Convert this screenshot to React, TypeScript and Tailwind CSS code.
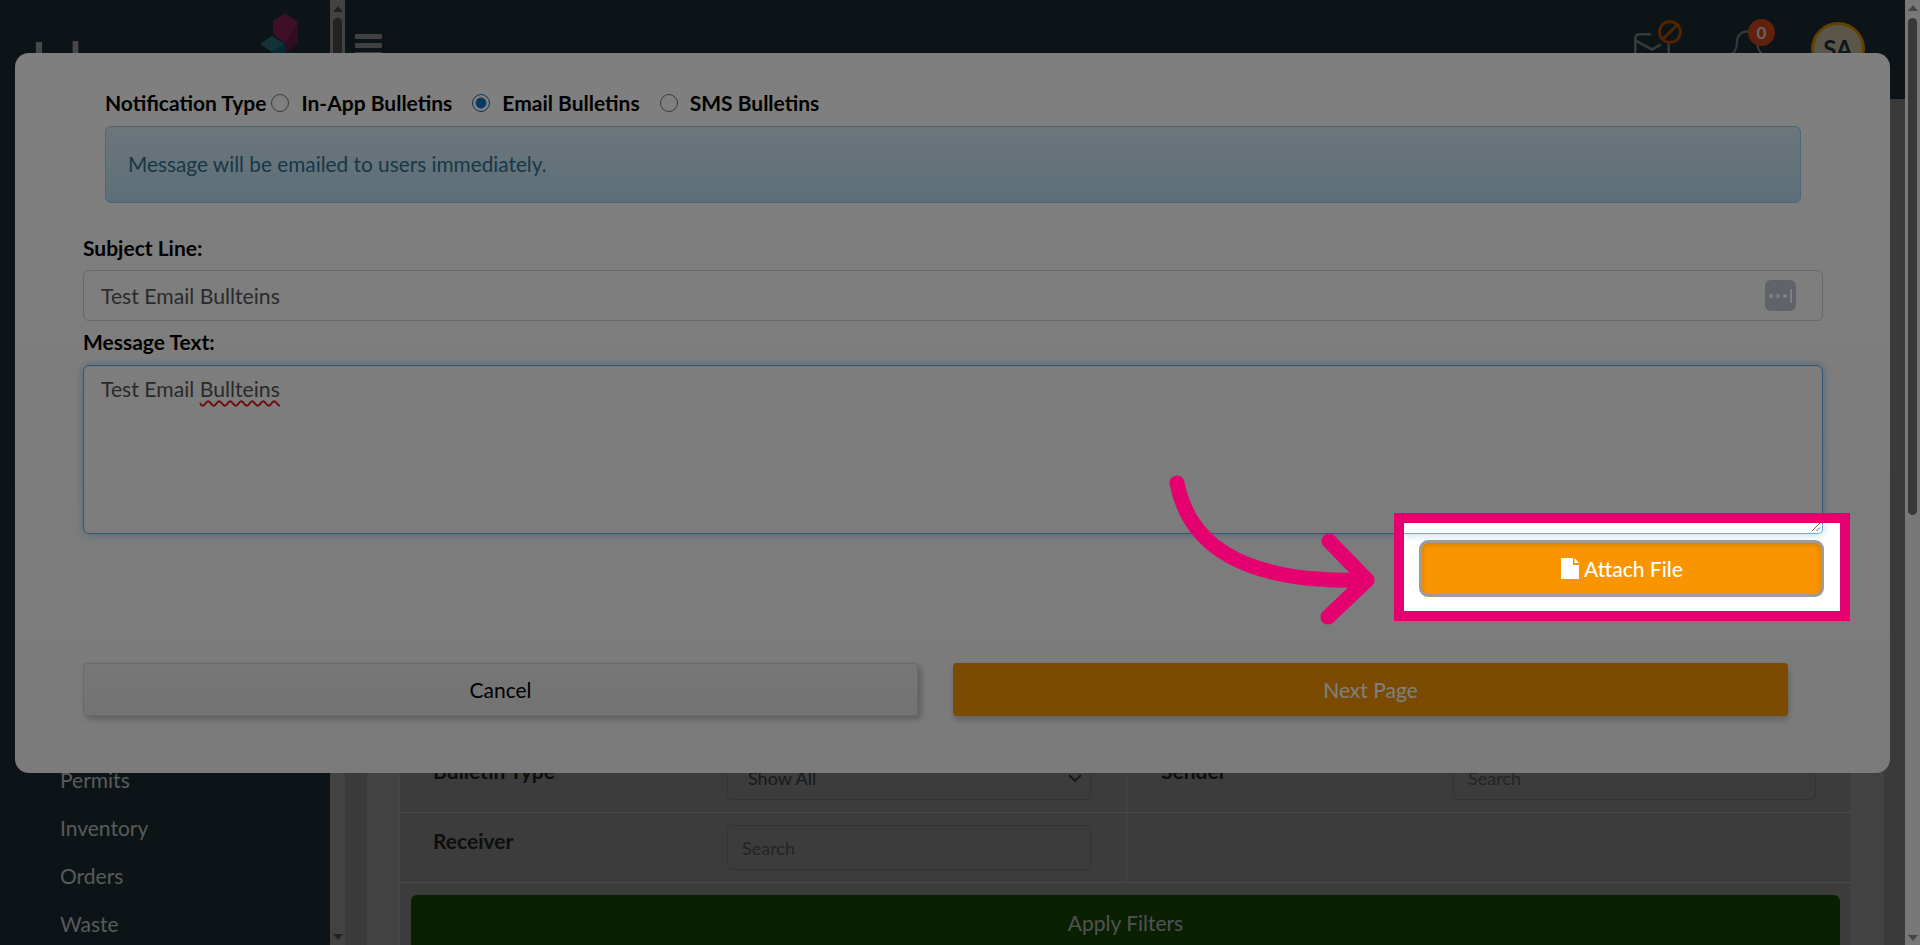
import { Bell } from "lucide-react";

function Radio({ label, checked }: { label: string; checked?: boolean }) {
  return (
    <label className="flex items-center">
      <input
        type="radio"
        name="notification-type"
        defaultChecked={checked}
        className="h-[18px] w-[18px] m-0 accent-[#1472c4]"
      />
      <span className="ml-[12px] font-bold text-[21px]">{label}</span>
    </label>
  );
}

function SidebarScrollbar() {
  return (
    <div className="w-[15px] h-full bg-[#848484] flex flex-col items-center pt-[6px]">
      <div className="w-0 h-0 border-x-[5px] border-x-transparent border-b-[6px] border-b-[#444]" />
      <div className="mt-[6px] w-[9px] h-[300px] rounded-full bg-[#444]" />
      <div className="mt-auto mb-[5px] w-0 h-0 border-x-[5px] border-x-transparent border-t-[6px] border-t-[#444]" />
    </div>
  );
}

function PageScrollbar() {
  return (
    <div className="w-[15px] h-full bg-[#f1f1f1] flex flex-col items-center pt-[5px]">
      <div className="w-0 h-0 border-x-[5px] border-x-transparent border-b-[6px] border-b-[#8a8a8a]" />
      <div className="mt-[7px] w-[9px] h-[497px] rounded-full bg-[#707070]" />
      <div className="mt-auto mb-[4px] w-0 h-0 border-x-[5px] border-x-transparent border-t-[6px] border-t-[#8a8a8a]" />
    </div>
  );
}

function LogoCubes() {
  return (
    <svg width="40" height="70" viewBox="0 0 40 70" className="mt-[13px]">
      <path d="M25 0l13 9v21L25 30 13 21V8z" fill="#7a2050" />
      <path d="M25 30l13-21v21l-13 10z" fill="#601a42" />
      <path d="M12 23l13 8-13 8L0 31z" fill="#28646f" />
      <path d="M25 31v20L12 58V39z" fill="#084f60" />
    </svg>
  );
}

function Header() {
  return (
    <header className="h-[99px] shrink-0 bg-[#19292f] flex items-start pl-[10px] pr-[40px]">
      <div className="mt-[34px] w-[27px] flex flex-col gap-[4px]">
        <div className="h-[5px] rounded-[1px] bg-[#808080]" />
        <div className="h-[5px] rounded-[1px] bg-[#808080]" />
        <div className="h-[5px] rounded-[1px] bg-[#808080]" />
      </div>
      <div className="relative ml-auto mt-[33px] w-[36px] h-[40px]">
        <svg width="36" height="40" viewBox="0 0 36 40" fill="none" stroke="#6c7276" strokeWidth="2.6" strokeLinecap="round">
          <path d="M16 1.3H5a4 4 0 0 0-3.7 4V36" />
          <path d="M1.3 7.5L18 16.5l8-4.5" />
          <path d="M34.7 12V36" />
        </svg>
        <svg width="26" height="26" viewBox="0 0 26 26" fill="none" stroke="#a84800" strokeWidth="2.8" className="absolute right-[-13px] top-[-14px]">
          <circle cx="13" cy="13" r="10.5" />
          <path d="M6 20L20 6" />
        </svg>
      </div>
      <div className="relative ml-[57px] mt-[28px] w-[40px] h-[40px] text-[#6c7276]">
        <Bell size={40} strokeWidth={1.4} />
        <div className="absolute left-[21px] top-[-9px] w-[27px] h-[27px] rounded-full bg-[#c4431a] flex items-center justify-center text-[17px] font-bold text-[#c8c8c8]">
          0
        </div>
      </div>
      <div className="ml-[44px] mt-[22px] w-[54px] h-[54px] rounded-full border-[3px] border-[#c88000] bg-[#b4ae92] flex items-center justify-center text-[24px] font-bold text-[#1d2c3d]">
        SA
      </div>
    </header>
  );
}

function FilterCard() {
  return (
    <div className="mt-[643px] bg-[#787878] border-x border-[#8c8c8c]">
      <div className="flex h-[71px] border-b border-[#929292]">
        <div className="w-[726px] flex pl-[33px] pt-[17px] pr-[35px] justify-between items-start">
          <span className="text-[21px] font-bold text-[#1c1c1c] leading-[24px]">Bulletin Type</span>
          <div className="mt-[-4px] w-[364px] h-[45px] rounded-[5px] border border-[#666] flex items-center justify-between pl-[20px] pr-[8px] pt-[2px] text-[18px] text-[#333]">
            Show All
            <svg width="14" height="9" viewBox="0 0 14 9" fill="none" stroke="#2a2a2a" strokeWidth="1.8">
              <path d="M1 1l6 6 6-6" />
            </svg>
          </div>
        </div>
        <div className="flex-1 border-l border-[#8c8c8c] flex pl-[34px] pr-[35px] pt-[17px] justify-between items-start">
          <span className="text-[21px] font-bold text-[#1c1c1c] leading-[24px]">Sender</span>
          <div className="mt-[-4px] w-[363px] h-[45px] rounded-[5px] border border-[#666] flex items-center pl-[14px] pt-[2px] text-[18px] text-[#484848]">
            Search
          </div>
        </div>
      </div>
      <div className="flex h-[70px] border-b border-[#929292]">
        <div className="w-[726px] flex pl-[33px] pr-[35px] pt-[12px] justify-between items-start">
          <span className="mt-[4px] text-[21px] font-bold text-[#1c1c1c] leading-[24px]">Receiver</span>
          <div className="w-[364px] h-[45px] rounded-[5px] border border-[#666] flex items-center pl-[14px] pt-[2px] text-[18px] text-[#484848]">
            Search
          </div>
        </div>
        <div className="flex-1 border-l border-[#8c8c8c]" />
      </div>
      <div className="px-[11px] pt-[12px]">
        <div className="h-[80px] rounded-[6px] bg-[#124005] pt-[10px] text-center text-[21px] leading-[36px] text-[#a4a4a4]">
          Apply Filters
        </div>
      </div>
    </div>
  );
}

function Modal() {
  return (
    <div className="absolute left-[15px] top-[53px] w-[1875px] h-[720px] rounded-[14px] bg-gradient-to-b from-white to-[#f6f6f6] pt-[35px] pl-[68px] pr-[67px] text-black">
      <div className="ml-[22px] h-[30px] flex items-center text-[21px]">
        <span className="font-bold">Notification Type</span>
        <div className="ml-[5px] flex items-center gap-[20px]">
          <Radio label="In-App Bulletins" />
          <Radio label="Email Bulletins" checked />
          <Radio label="SMS Bulletins" />
        </div>
      </div>
      <div className="mt-[8px] mx-[22px] h-[77px] rounded-[6px] border border-[#9acfea] bg-gradient-to-b from-[#d9edf7] to-[#b9def0] flex items-center pl-[22px] pb-[2px] text-[20.8px] text-[#31708f]">
        Message will be emailed to users immediately.
      </div>
      <div className="mt-[33px] h-[24px] leading-[24px] text-[21px] font-bold">Subject Line:</div>
      <div className="mt-[10px] h-[51px] rounded-[6px] border border-[#cfcfcf] flex items-center justify-between pl-[17px] pr-[26px] text-[21.2px] text-[#555]">
        <span className="mt-[3px]">Test Email Bullteins</span>
        <div className="w-[31px] h-[31px] rounded-[6px] bg-[#c0c7d2] flex items-center justify-center gap-[3px]">
          <span className="w-[4px] h-[4px] rounded-full bg-white" />
          <span className="w-[4px] h-[4px] rounded-full bg-white" />
          <span className="w-[4px] h-[4px] rounded-full bg-white" />
          <span className="w-[2px] h-[14px] bg-white" />
        </div>
      </div>
      <div className="mt-[9px] h-[24px] leading-[24px] text-[21px] font-bold">Message Text:</div>
      <div className="mt-[11px] h-[169px] rounded-[6px] border border-[#66afe9] shadow-[inset_0_1px_1px_rgba(0,0,0,0.075),0_0_8px_rgba(102,175,233,0.6)] pl-[17px] pt-[9px] text-[21.2px] leading-[28px] text-[#555]">
        Test Email{" "}
        <span className="underline decoration-wavy decoration-[#e01010] decoration-[1.5px] underline-offset-[3px]">Bullteins</span>
      </div>
      <div className="mt-[129px] flex gap-[35px] text-[21px]">
        <div className="w-[835px] h-[53px] rounded-[4px] border border-[#d4d4d4] bg-gradient-to-b from-[#eeeeee] to-[#e6e6e6] shadow-[3px_3px_6px_rgba(0,0,0,0.25)] flex items-center justify-center">
          Cancel
        </div>
        <div className="w-[835px] h-[53px] rounded-[4px] bg-[#f49600] shadow-[1px_4px_6px_rgba(0,0,0,0.2)] flex items-center justify-center text-[#fff]">
          Next Page
        </div>
      </div>
    </div>
  );
}

function Highlight() {
  return (
    <div className="absolute left-[1394px] top-[513px] w-[456px] h-[108px] border-[10px] border-[#e5006f] bg-white overflow-hidden">
      <div className="relative w-[419px] h-[11px] border-b border-r border-[#66afe9] rounded-br-[5px] shadow-[0_0_8px_rgba(102,175,233,0.6)]">
        <svg width="10" height="10" viewBox="0 0 10 10" className="absolute right-[1px] bottom-[1px]" stroke="#555" strokeWidth="0.9">
          <path d="M1 9L9 1M5.5 9L9 5.5" />
        </svg>
      </div>
      <div className="ml-[15px] mt-[6px] w-[405px] h-[57px] rounded-[9px] border-[3px] border-[#9c9c9c] bg-[#f99500] shadow-[inset_0_2px_5px_rgba(0,0,0,0.15)] flex items-center justify-center text-[21px] font-medium text-white">
        <svg width="20" height="21" viewBox="0 0 20 21" fill="white" className="mr-[4px]">
          <path d="M1 0h12v7h6v14H1z" />
          <path d="M14.5 0l4.5 5h-4.5z" />
        </svg>
        Attach File
      </div>
    </div>
  );
}

function Arrow() {
  return (
    <svg
      width="250"
      height="170"
      viewBox="0 0 250 170"
      fill="none"
      stroke="#e5006f"
      strokeWidth="15"
      strokeLinecap="round"
      strokeLinejoin="round"
      className="absolute left-[1160px] top-[460px]"
    >
      <path d="M17 23C28 80 75 124 207 120" />
      <path d="M169 81L207 120L168 157" />
    </svg>
  );
}

export default function App() {
  return (
    <div className="relative w-[1920px] h-[945px] overflow-hidden flex font-[Lato,sans-serif] bg-[#848484]">
      <aside className="w-[330px] h-full bg-[#19292f]">
        <div className="h-[99px] flex items-start pl-[30px] overflow-hidden">
          <div className="w-[230px] mt-[28px] text-[64px] leading-[72px] text-[#909090]">Ideaco</div>
          <LogoCubes />
        </div>
        <nav className="pt-[657px] flex flex-col text-[21px] leading-[48px] pl-[60px] text-[#b4b4b4]">
          <span>Permits</span>
          <span>Inventory</span>
          <span>Orders</span>
          <span>Waste</span>
        </nav>
      </aside>
      <SidebarScrollbar />
      <main className="flex-1 min-w-0 h-full bg-[#747474] flex flex-col">
        <Header />
        <div className="flex-1 mx-[22px] mr-[21px] px-[32px] bg-[#848484]">
          <FilterCard />
        </div>
      </main>
      <PageScrollbar />
      <Modal />
      <div className="absolute inset-0 bg-black/50" />
      <Highlight />
      <Arrow />
    </div>
  );
}
